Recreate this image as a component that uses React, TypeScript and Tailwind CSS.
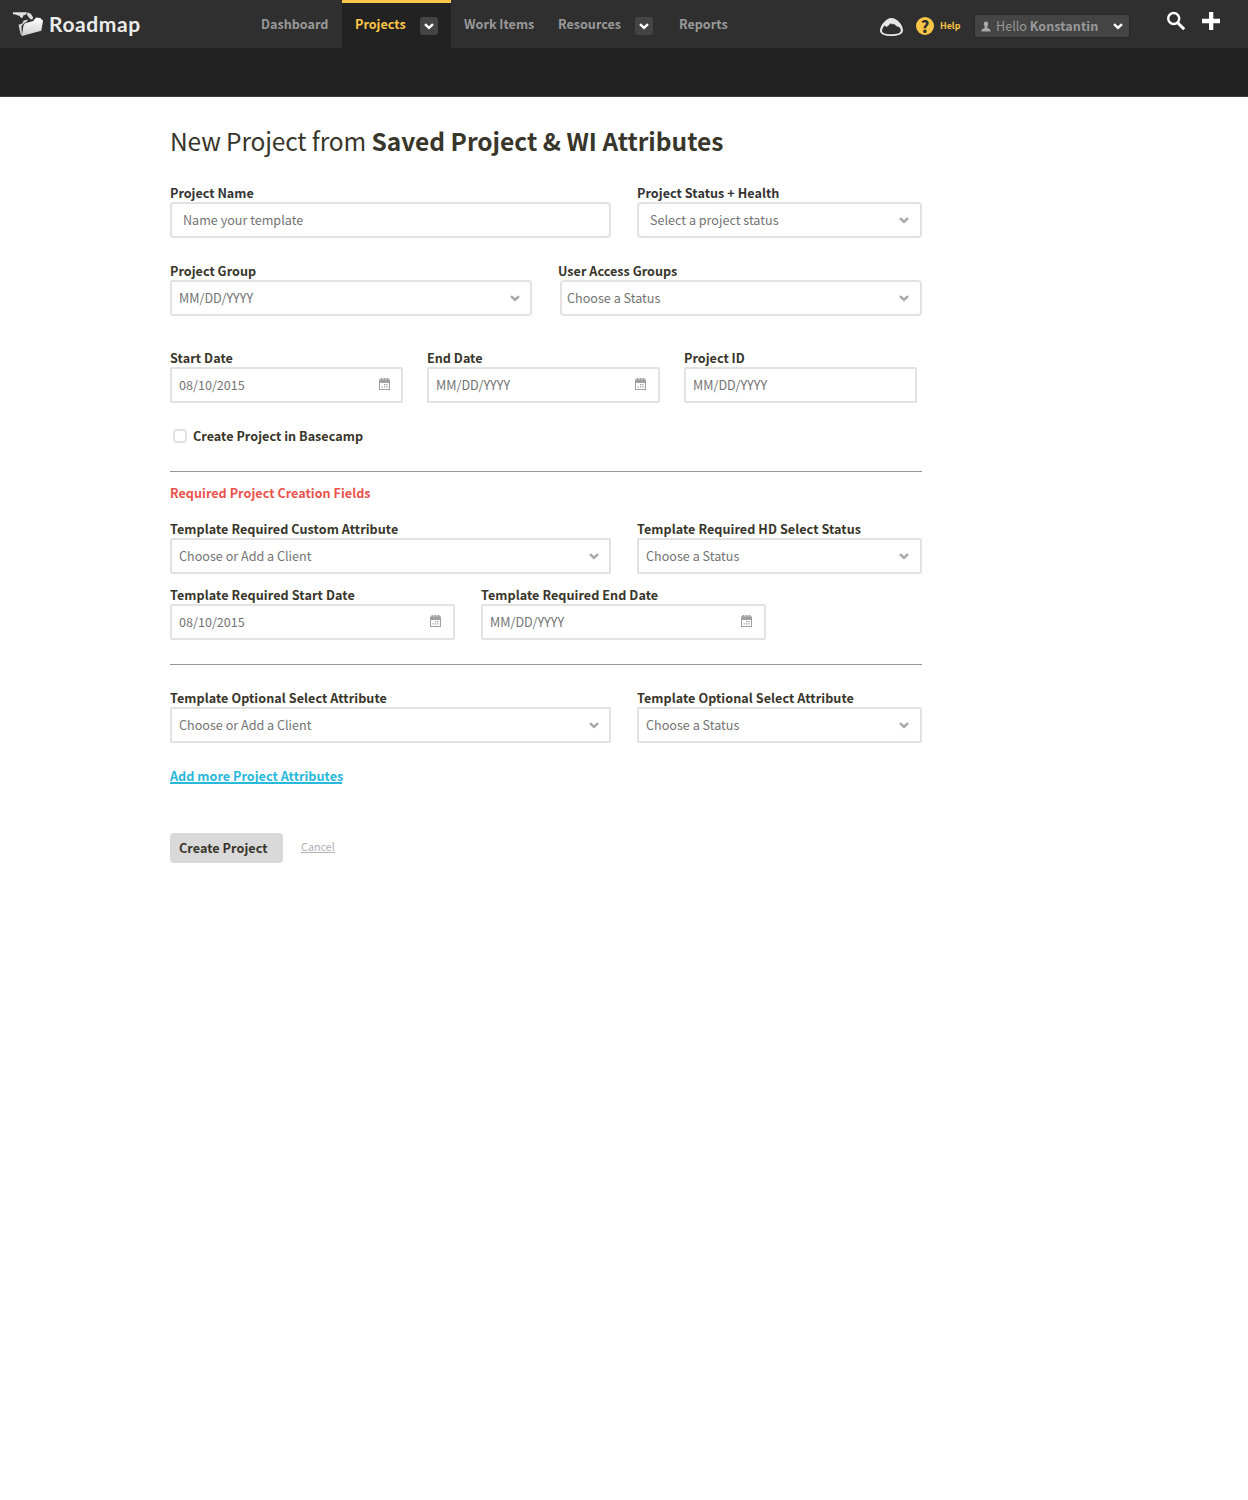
import React from "react";

const sans = "font-['Noto_Sans_CJK_SC',sans-serif]";

function Chevron({ className }: { className: string }) {
  return (
    <svg viewBox="0 0 10 7" className={className} fill="none" stroke="currentColor" strokeWidth="2.4">
      <path d="M1 1.100 5 4.900 9 1.100" />
    </svg>
  );
}

function CalendarIcon() {
  return (
    <svg viewBox="0 0 11 12" className="h-3 w-[11px] shrink-0 text-[#a0a0a0]" fill="currentColor">
      <path fillRule="evenodd" d="M0 1.500h1.500V0h2v1.500H4.600V0h1.900v1.500h1V0h2v1.500H11V12H0zM1 5v6h9V5z" />
      <path d="M5 6h1.300v1.300H5zM7.200 6h1.300v1.300H7.200zM2.700 8.300H4v1.300H2.700zM5 8.300h1.300v1.300H5zM7.200 8.300h1.300v1.300H7.200z" />
    </svg>
  );
}

type FieldProps = {
  label: string;
  value: string;
  width: string;
  icon?: "chevron" | "calendar";
  pad?: string;
  radius?: string;
  labelClass?: string;
  boxClass?: string;
  iconMargin?: string;
};

function Field({
  label,
  value,
  width,
  icon,
  pad = "pl-[7px]",
  radius = "rounded-[2px]",
  labelClass = "tracking-[0.02px] text-[#38352a]",
  boxClass = "",
  iconMargin = "mr-[11px]",
}: FieldProps) {
  return (
    <div className={`${width} shrink-0`}>
      <div className={`h-[18px] whitespace-nowrap text-[12.6px] font-bold leading-[18px] ${labelClass}`}>{label}</div>
      <div className={`flex h-9 items-center justify-between border-2 border-[#e2e2e2] bg-white ${pad} ${radius} ${boxClass}`}>
        <span className="whitespace-nowrap text-[12.6px] leading-[18px] text-[#737373]">{value}</span>
        {icon === "chevron" && <Chevron className={`${iconMargin} h-[7px] w-[10px] text-[#a6a6a6]`} />}
        {icon === "calendar" && (
          <span className={`${iconMargin} pb-[2px]`}>
            <CalendarIcon />
          </span>
        )}
      </div>
    </div>
  );
}

function Logo() {
  return (
    <div className="ml-[12px] flex h-12 w-[230px] items-center">
      <svg viewBox="0 0 32 26" className="h-[26px] w-8 shrink-0">
        <defs>
          <linearGradient id="folder" x1="0" y1="0" x2="0" y2="1">
            <stop offset="0" stopColor="#fff" />
            <stop offset="1" stopColor="#cfcfcf" />
          </linearGradient>
        </defs>
        <path fill="#e2e2e2" d="M1 1.300 15.500 1.200 13 4.200l-1.200-.4L10.500 7 8.300 6.300 7.500 4.700 5 4.200 4 3.600 1 3.300z" />
        <path fill="#dcdcdc" d="M14.500 3.200 16.500 1.500 19 3l2 3.200-.5 2.300-2-.2-2-2.300z" />
        <path fill="#d8d8d8" d="m6.500 13.700 3.800-1.200 1.400-3 4.500-1-1.700 2.300-2.800 1.700L9.500 15 9.800 24 8.700 23.500z" />
        <path fill="url(#folder)" d="M11.500 14.500 13 12.300l8.300-2.300 1.200-1.700 1.700-1.800 4.300.5 1 1.500 1.500.7-.2 2-1.500 8.500L9.700 25z" />
      </svg>
      <span className="ml-[5px] font-['Lato',sans-serif] text-[21px] font-bold leading-6 tracking-[0.6px] text-[#ebebeb]">Roadmap</span>
    </div>
  );
}

function DropButton() {
  return (
    <span className="mt-[2px] flex h-[18px] w-[18px] items-center justify-center rounded-[3px] bg-[#444] text-white">
      <Chevron className="h-[7px] w-[10px]" />
    </span>
  );
}

function Header() {
  return (
    <header className="h-[97px] border-b border-[#3a3a3a] bg-[#222]">
      <div className="flex h-12 bg-[#2f2f2f] text-[12.6px] font-bold leading-[18px] text-[#999]">
        <Logo />
        <nav className="flex h-12 w-[638px] shrink-0 whitespace-nowrap">
          <a className="w-[100px] pl-[19px] pt-[15px]">Dashboard</a>
          <div className="flex h-12 w-[109px] border-t-[3px] border-[#fbc547] bg-[#222] pl-[13px] pt-3 text-[#fbc547]">
            <a className="w-[65px]">Projects</a>
            <DropButton />
          </div>
          <a className="w-[107px] pl-[13px] pt-[15px]">Work Items</a>
          <div className="flex w-[121px] pt-[15px]">
            <a className="w-[77px]">Resources</a>
            <DropButton />
          </div>
          <a className="pt-[15px]">Reports</a>
        </nav>
        <div className="flex h-12 shrink-0">
          <svg viewBox="0 0 24 20" className="-ml-px mt-[17px] h-5 w-6 shrink-0">
            <path
              fill="#e6e6e6"
              fillRule="evenodd"
              d="M12.500 1C7 1 1 8.500 1 13.500 1 17.500 6 19 12.300 19S24 17.500 24 13.200C24 8 18 1 12.500 1zM3 13.400c.3-1.700 1.200-3.500 2.500-5l2.200 1.700 4.200-3.800 1.700 1.300 1.100-.8 3.400 2.700 2.100.4c1.100 1.300 1.600 2.400 1.600 3.500 0 2.700-4.100 3.800-9.800 3.800S2.800 16 3 13.400z"
            />
          </svg>
          <span className="ml-[13px] mt-[17px] flex h-[18px] w-[18px] items-center justify-center rounded-full bg-[#fbc547] text-[16px] font-black leading-[18px] text-[#2f2f2f]">
            <span className="-mt-px">?</span>
          </span>
          <span className="ml-[6px] mt-[17px] w-[34px] text-[8.900px] text-[#fbc547]">Help</span>
          <div className="mt-[14px] flex h-[24px] w-[156px] items-center rounded-[3px] border border-[#292929] bg-[#444] pl-[6px] pr-[6px]">
            <svg viewBox="0 0 10 11" className="h-[11px] w-[10px]" fill="#a8a8a8">
              <path d="M5 0.500C6.700.5 7.400 1.600 7.200 3.200 7.100 4.500 6.500 5 6.300 6c-.1 1 .2 1.300 1.200 1.600C9 8.100 9.600 8.500 9.600 10.500H.4C.4 8.500 1 8.100 2.500 7.600 3.500 7.300 3.800 7 3.700 6 3.500 5 2.900 4.500 2.800 3.200 2.600 1.600 3.300.5 5 .5z" />
            </svg>
            <span className="ml-[5px] grow whitespace-nowrap font-normal">
              Hello <b className="font-bold tracking-[0.05px]">Konstantin</b>
            </span>
            <Chevron className="h-[7px] w-[10px] text-white" />
          </div>
          <svg viewBox="0 0 20 20" className="ml-9 mt-[11px] h-5 w-5" fill="none" stroke="#fff">
            <circle cx="7.700" cy="7.500" r="5.500" strokeWidth="2.400" />
            <path d="m11.700 11.700 6.500 6.500" strokeWidth="3" />
          </svg>
          <svg viewBox="0 0 18 18" className="ml-4 mt-3 h-[18px] w-[18px]" fill="#fff">
            <path d="M7 0h4.300v6.800H18v4.400h-6.700V18H7v-6.800H0V6.800h7z" />
          </svg>
        </div>
      </div>
    </header>
  );
}

const templateLabel = "tracking-[0.065px] text-[#38352a]";
const plainLabel = "text-[#333]";

export default function App() {
  return (
    <div className={`min-h-[1500px] w-[1248px] bg-white ${sans}`}>
      <Header />
      <main className="ml-[170px] w-[752px] pt-[26px]">
        <h1 className="h-9 whitespace-nowrap text-[24.5px] font-normal leading-9 tracking-[-0.13px] text-[#38352a]">
          New Project from <b className="font-bold tracking-[-0.015px]">Saved Project &amp; WI Attributes</b>
        </h1>
        <div className="mt-[25px] flex justify-between">
          <Field label="Project Name" value="Name your template" width="w-[441px]" pad="pl-[11px]" radius="rounded-[4px]" labelClass={plainLabel} />
          <Field label="Project Status + Health" value="Select a project status" width="w-[285px]" icon="chevron" pad="pl-[11px]" radius="rounded-[4px]" labelClass={`tracking-[0.05px] ${plainLabel}`} />
        </div>
        <div className="mt-6 flex justify-between">
          <Field label="Project Group" value="MM/DD/YYYY" width="w-[362px]" icon="chevron" radius="rounded-[3px]" iconMargin="mr-[10px]" />
          <Field label="User Access Groups" value="Choose a Status" width="w-[364px]" icon="chevron" radius="rounded-[4px]" pad="pl-[5px]" boxClass="ml-[2px]" />
        </div>
        <div className="mt-[33px] flex gap-6">
          <Field label="Start Date" value="08/10/2015" width="w-[233px]" icon="calendar" labelClass="tracking-[0.08px] text-[#38352a]" />
          <Field label="End Date" value="MM/DD/YYYY" width="w-[233px]" icon="calendar" iconMargin="mr-3" />
          <Field label="Project ID" value="MM/DD/YYYY" width="w-[233px]" />
        </div>
        <label className="mt-6 flex h-[18px] items-center pl-[3px] text-[12.6px] font-bold leading-[18px] tracking-[0.035px] text-[#38352a]">
          <span className="mr-[6px] h-[14px] w-[14px] rounded-[4px] border-2 border-[#e2e2e2]" />
          Create Project in Basecamp
        </label>
        <div className="mt-[26px] h-px bg-[#979797]" />
        <h2 className="mt-3 h-[18px] text-[12.6px] font-bold leading-[18px] tracking-[0.035px] text-[#ea534d]">Required Project Creation Fields</h2>
        <div className="mt-[18px] flex justify-between">
          <Field label="Template Required Custom Attribute" value="Choose or Add a Client" width="w-[441px]" icon="chevron" iconMargin="mr-[10px]" labelClass={templateLabel} />
          <Field label="Template Required HD Select Status" value="Choose a Status" width="w-[285px]" icon="chevron" labelClass={templateLabel} />
        </div>
        <div className="mt-3 flex gap-[26px]">
          <Field label="Template Required Start Date" value="08/10/2015" width="w-[285px]" icon="calendar" iconMargin="mr-3" labelClass="tracking-[0.09px] text-[#38352a]" />
          <Field label="Template Required End Date" value="MM/DD/YYYY" width="w-[285px]" icon="calendar" iconMargin="mr-3" labelClass={templateLabel} />
        </div>
        <div className="mt-6 h-px bg-[#979797]" />
        <div className="mt-6 flex justify-between">
          <Field label="Template Optional Select Attribute" value="Choose or Add a Client" width="w-[441px]" icon="chevron" iconMargin="mr-[10px]" labelClass={templateLabel} />
          <Field label="Template Optional Select Attribute" value="Choose a Status" width="w-[285px]" icon="chevron" labelClass={templateLabel} />
        </div>
        <div className="mt-6 flex">
          <a className="h-[17px] w-[172px] whitespace-nowrap border-b-2 border-[#28b8da] text-[12.6px] font-bold leading-[18px] tracking-[0.035px] text-[#28b8da]">Add more Project Attributes</a>
        </div>
        <div className="mt-[49px] flex">
          <button className="h-[30px] w-[113px] rounded-[4px] bg-[#d9d9d9] pl-[9px] text-left text-[12.6px] font-bold leading-[30px] tracking-[0.06px] text-[#38352a]">Create Project</button>
          <a className="ml-[18px] mt-[4px] h-4 border-b border-[#b5b5b5] text-[10.8px] leading-[18px] text-[#b0b0b0]">Cancel</a>
        </div>
      </main>
    </div>
  );
}
